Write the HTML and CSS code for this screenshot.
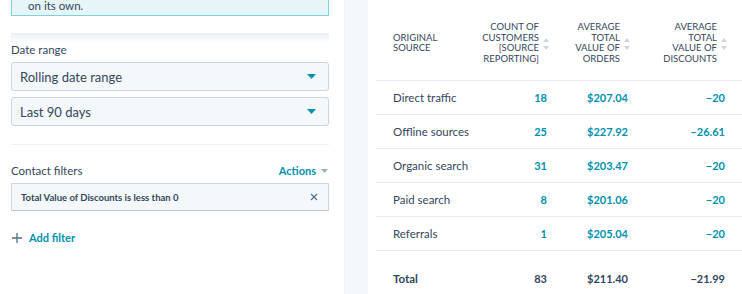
FILE: index.html
```html
<!DOCTYPE html>
<html lang="en">
<head>
    <meta charset="UTF-8">
    <title>Report filters</title>
    <link rel="stylesheet" href="styles.css">
</head>
<body>
    <div class="page">
        <!-- Filters panel -->
        <aside class="panel">
            <div class="alert">on its own.</div>
            <div class="band"></div>

            <div class="label">Date range</div>
            <div class="select">
                <span>Rolling date range</span>
                <svg class="caret" width="9" height="5" viewBox="0 0 9 5"><path d="M0 0h9L4.5 5z"/></svg>
            </div>
            <div class="select">
                <span>Last 90 days</span>
                <svg class="caret" width="9" height="5" viewBox="0 0 9 5"><path d="M0 0h9L4.5 5z"/></svg>
            </div>

            <div class="divider"></div>

            <div class="filters-head">
                <span class="label">Contact filters</span>
                <span class="actions">Actions
                    <svg width="7" height="4" viewBox="0 0 7 4"><path d="M0 0h7L3.5 4z"/></svg>
                </span>
            </div>
            <div class="filter">
                <span>Total Value of Discounts is less than 0</span>
                <svg width="8" height="8" viewBox="0 0 8 8"><path d="M1 1l6 6M7 1L1 7"/></svg>
            </div>

            <div class="add-filter">
                <svg width="10" height="10" viewBox="0 0 10 10"><path d="M5 0v10M0 5h10"/></svg>
                Add filter
            </div>
        </aside>

        <div class="gutter"></div>

        <!-- Report table -->
        <main class="report">
            <div class="row head">
                <div class="cell first">Original<br>source</div>
                <div class="cell num">
                    <span>Count of<br>customers<br>[source<br>reporting]</span>
                    <svg class="sort" width="6" height="12" viewBox="0 0 6 12"><path d="M3 0l3 4H0zM0 8h6l-3 4z"/></svg>
                </div>
                <div class="cell num">
                    <span>Average<br>total<br>value of<br>orders</span>
                    <svg class="sort" width="6" height="12" viewBox="0 0 6 12"><path d="M3 0l3 4H0zM0 8h6l-3 4z"/></svg>
                </div>
                <div class="cell num">
                    <span>Average<br>total<br>value of<br>discounts</span>
                    <svg class="sort" width="6" height="12" viewBox="0 0 6 12"><path d="M3 0l3 4H0zM0 8h6l-3 4z"/></svg>
                </div>
            </div>

            <div class="row">
                <div class="cell first">Direct traffic</div>
                <div class="cell num link">18</div>
                <div class="cell num link">$207.04</div>
                <div class="cell num link">&minus;20</div>
            </div>
            <div class="row">
                <div class="cell first">Offline sources</div>
                <div class="cell num link">25</div>
                <div class="cell num link">$227.92</div>
                <div class="cell num link">&minus;26.61</div>
            </div>
            <div class="row">
                <div class="cell first">Organic search</div>
                <div class="cell num link">31</div>
                <div class="cell num link">$203.47</div>
                <div class="cell num link">&minus;20</div>
            </div>
            <div class="row">
                <div class="cell first">Paid search</div>
                <div class="cell num link">8</div>
                <div class="cell num link">$201.06</div>
                <div class="cell num link">&minus;20</div>
            </div>
            <div class="row">
                <div class="cell first">Referrals</div>
                <div class="cell num link">1</div>
                <div class="cell num link">$205.04</div>
                <div class="cell num link">&minus;20</div>
            </div>

            <div class="row total">
                <div class="cell first">Total</div>
                <div class="cell num">83</div>
                <div class="cell num">$211.40</div>
                <div class="cell num">&minus;21.99</div>
            </div>
        </main>
    </div>
</body>
</html>
```

FILE: styles.css
```css
body {
    margin: 0;
    background-color: #fff;
    color: #33475b;
    font-family: Lato, "Noto Sans", sans-serif;
    overflow: hidden;
}
.page {
    display: flex;
    height: 294px;
}
/* Left filter panel */
.panel {
    width: 318px;
    padding: 0 15px 0 11px;
    flex-shrink: 0;
}
.alert {
    padding: 0 16px 3px;
    line-height: 12px;
    font-size: 11.5px;
    background-color: #e5f5f8;
    border: 1px solid #7fd1de;
    border-top: none;
}
.band {
    height: 10px;
    margin-top: 17px;
    background: linear-gradient(#eaf0f6, #fff);
}
.label {
    font-size: 11.5px;
    line-height: 14px;
}
.band + .label {
    margin-bottom: 5px;
}
.select {
    display: flex;
    justify-content: space-between;
    align-items: center;
    height: 27px;
    padding: 0 12px 0 8px;
    margin-bottom: 6px;
    background-color: #f5f8fa;
    border: 1px solid #cbd6e2;
    border-radius: 3px;
    font-size: 13px;
}
.caret {
    fill: #0091ae;
}
.divider {
    height: 1px;
    margin-top: 18px;
    background-color: #eaf0f6;
}
.filters-head {
    display: flex;
    justify-content: space-between;
    align-items: center;
    margin: 18px 0 4px;
    line-height: 16px;
}
.actions {
    display: flex;
    align-items: center;
    gap: 5px;
    font-size: 11px;
    font-weight: 700;
    color: #0091ae;
}
.actions svg {
    fill: #99afc4;
    margin-right: 1px;
}
.filter {
    display: flex;
    justify-content: space-between;
    align-items: center;
    height: 26px;
    padding: 0 10px 0 9px;
    background-color: #f5f8fa;
    border: 1px solid #cbd6e2;
    border-bottom-color: #b8c7d6;
    font-size: 9.5px;
    font-weight: 700;
}
.filter svg {
    stroke: #516f90;
    stroke-width: 1.2;
}
.add-filter {
    display: flex;
    align-items: center;
    gap: 7px;
    margin: 19px 0 0 1px;
    line-height: 16px;
    font-size: 11px;
    font-weight: 700;
    color: #0091ae;
}
.add-filter svg {
    stroke: #516f90;
    stroke-width: 1.3;
}
/* Grey gutter between panel and report */
.gutter {
    width: 23px;
    flex-shrink: 0;
    background-color: #f5f8fa;
    border-left: 1px solid #eef2f6;
}
/* Report table */
.report {
    flex: 1;
    padding-left: 8px;
}
.row {
    display: grid;
    grid-template-columns: 1fr 80px 81px 97px;
    align-items: center;
    height: 33px;
    padding: 0 14px 0 17px;
    border-bottom: 1px solid #e5ebf1;
    font-size: 11.5px;
}
.row.head {
    box-sizing: border-box;
    height: 81px;
    padding-top: 6px;
    font-size: 9.5px;
    line-height: 10.5px;
    text-transform: uppercase;
}
.cell.first {
    white-space: nowrap;
}
.cell.num {
    text-align: right;
    padding-right: 3px;
}
.head .cell.num {
    display: flex;
    justify-content: flex-end;
    align-items: center;
    gap: 4px;
    padding-right: 1px;
}
.sort {
    fill: #cbd6e2;
    margin-top: 2px;
}
.link {
    color: #0091ae;
    font-weight: 700;
    font-size: 11px;
}
.row.total {
    height: 54px;
    border-bottom: none;
    font-weight: 700;
}
.total .num {
    font-size: 11px;
}
```
